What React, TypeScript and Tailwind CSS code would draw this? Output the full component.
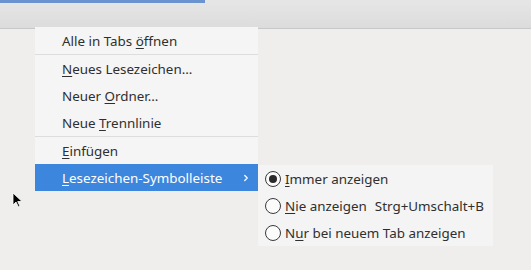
import { ChevronRight } from 'lucide-react';

interface Item {
    pre: string;
    key: string;
    post: string;
}

const mainItems: (Item | 'sep')[] = [
    { pre: 'Alle in Tabs ', key: 'ö', post: 'ffnen' },
    'sep',
    { pre: '', key: 'N', post: 'eues Lesezeichen…' },
    { pre: 'Neuer ', key: 'O', post: 'rdner…' },
    { pre: 'Neue ', key: 'T', post: 'rennlinie' },
    'sep',
    { pre: '', key: 'E', post: 'infügen' },
];

function Label({ item }: { item: Item }) {
    return (
        <span>
            {item.pre}
            <span className="underline underline-offset-2">{item.key}</span>
            {item.post}
        </span>
    );
}

function Radio({ checked }: { checked?: boolean }) {
    return (
        <span className="w-[16px] h-[16px] rounded-full border border-[#3a3a3a] bg-[#fbfbfb] flex items-center justify-center shrink-0">
            {checked && <span className="w-[8px] h-[8px] rounded-full bg-[#2a2a2a]" />}
        </span>
    );
}

export default function App() {
    return (
        <div className="relative w-[531px] h-[270px] bg-[#efeeed] overflow-hidden text-[13.4px] text-[#2f2f2f]" style={{ fontFamily: '"Noto Sans", "Open Sans", sans-serif' }}>
            {/* toolbar strip */}
            <div className="h-[29px] bg-gradient-to-b from-[#e6e6e6] to-[#dcdcdc] border-b border-[#c8c8c8]">
                <div className="w-[205px] h-[3px] bg-[#6a93cf]" />
            </div>

            {/* main context menu */}
            <div className="absolute left-[35px] top-[27px] w-[223px] bg-[#f5f5f5] flex flex-col">
                {mainItems.map((it, i) =>
                    it === 'sep' ? (
                        <div key={i} className="h-px bg-[#dddddd]" />
                    ) : (
                        <div key={i} className="h-[27px] flex items-center pl-[27px] pt-px">
                            <Label item={it} />
                        </div>
                    )
                )}
                <div className="h-[27px] flex items-center pl-[27px] pr-[7px] pt-px bg-[#3d86dd] text-white">
                    <Label item={{ pre: '', key: 'L', post: 'esezeichen-Symbolleiste' }} />
                    <ChevronRight className="ml-auto w-[10px] h-[10px]" strokeWidth={3} />
                </div>
            </div>

            {/* submenu */}
            <div className="absolute left-[258px] top-[165px] w-[235px] h-[81px] bg-[#f4f4f4] flex flex-col">
                <div className="h-[27px] flex items-center gap-[4px] pl-[7px] pt-px">
                    <Radio checked />
                    <Label item={{ pre: '', key: 'I', post: 'mmer anzeigen' }} />
                </div>
                <div className="h-[27px] flex items-center gap-[4px] pl-[7px] pt-px">
                    <Radio />
                    <Label item={{ pre: '', key: 'N', post: 'ie anzeigen' }} />
                    <span className="ml-[4px]">Strg+Umschalt+B</span>
                </div>
                <div className="h-[27px] flex items-center gap-[4px] pl-[7px] pt-px">
                    <Radio />
                    <Label item={{ pre: 'N', key: 'u', post: 'r bei neuem Tab anzeigen' }} />
                </div>
            </div>

            {/* mouse pointer */}
            <svg className="absolute left-[12px] top-[192px]" width="12" height="17" viewBox="0 0 12 17">
                <path d="M1 1 L1 13 L4 10 L6.5 15 L8 14.3 L5.7 9.5 L10 9.5 Z" fill="#000" stroke="#fff" strokeWidth="0.8" />
            </svg>
        </div>
    );
}
